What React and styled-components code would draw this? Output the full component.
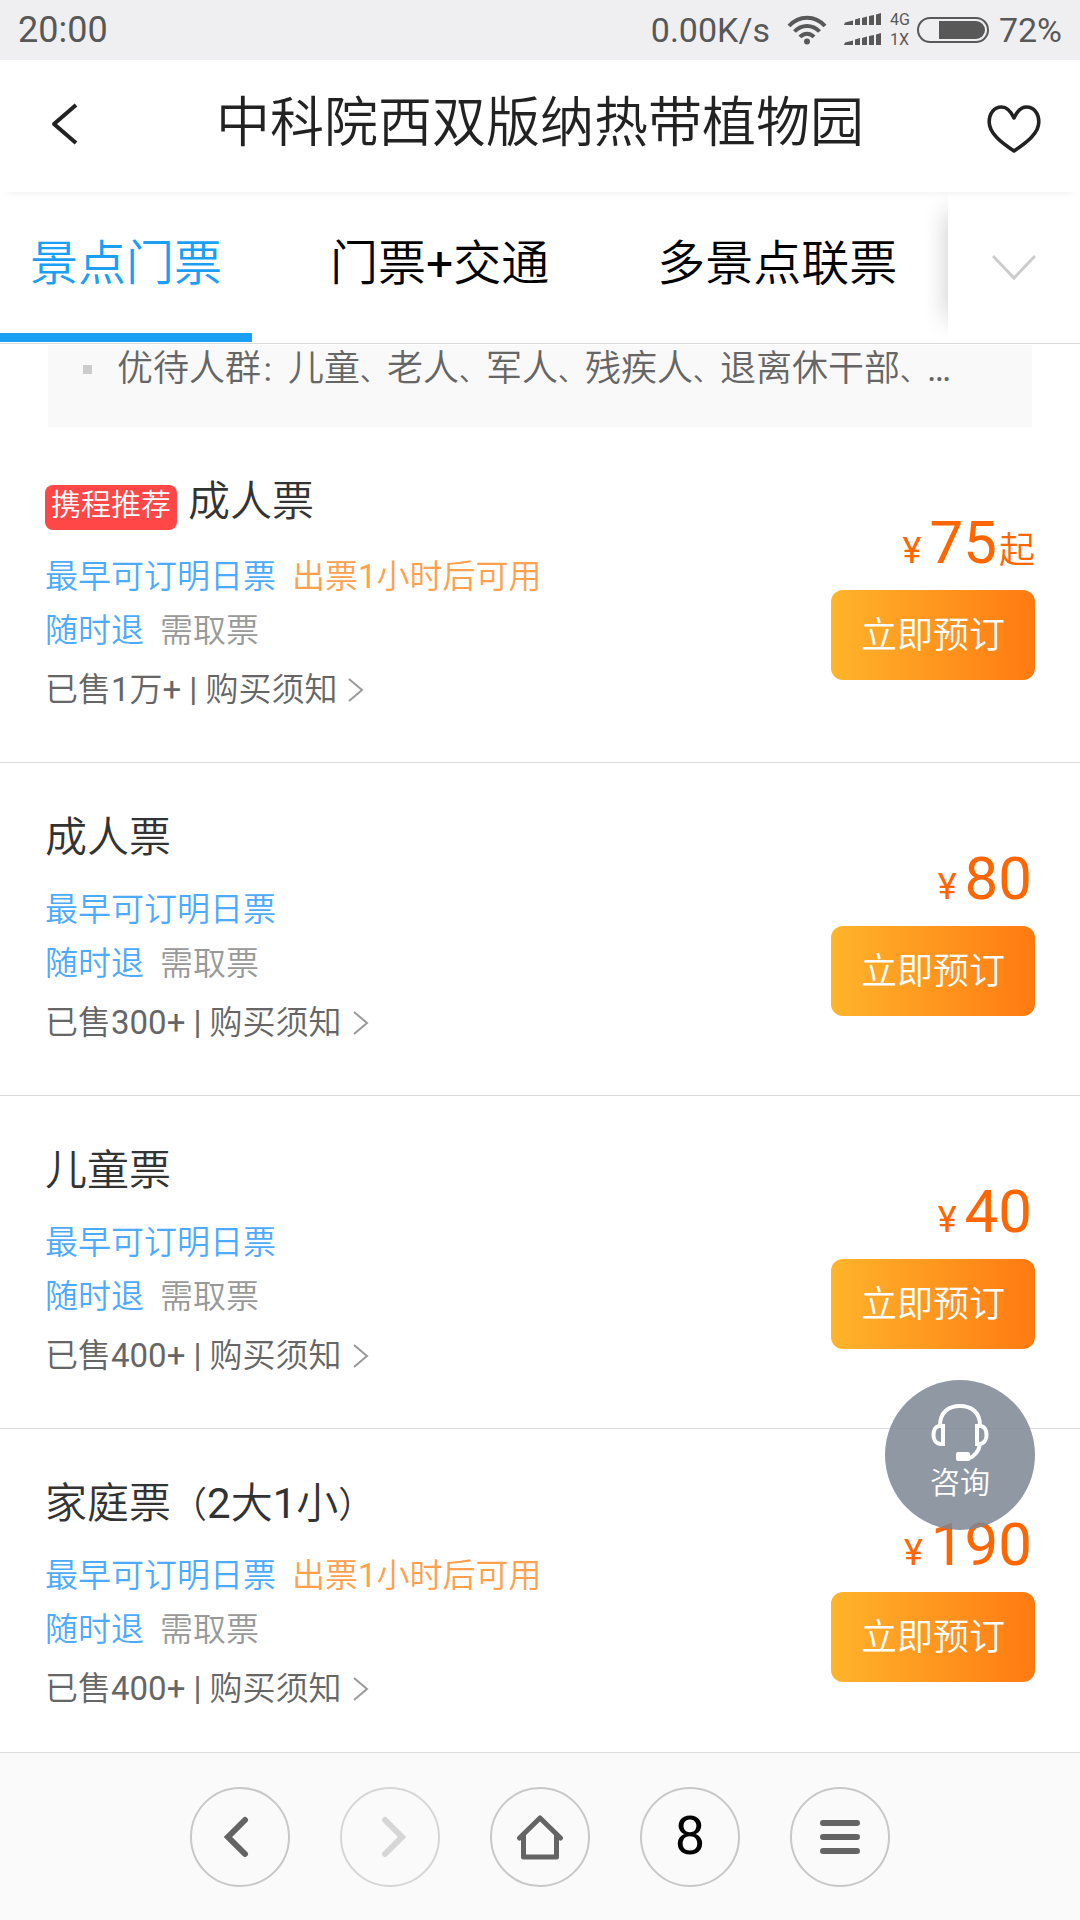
import React from "react";
import styled, { createGlobalStyle } from "styled-components";

const GlobalStyle = createGlobalStyle`
  *, *::before, *::after { box-sizing: border-box; }
  body {
    margin: 0;
    background: #fff;
    color: #333;
    font-family: Roboto, "Noto Sans CJK SC", sans-serif;
    font-weight: 400;
  }
  h1, h2, p, ul { margin: 0; padding: 0; font-weight: inherit; }
  ul { list-style: none; }
  button { border: 0; padding: 0; background: none; font: inherit; color: inherit; cursor: pointer; }
  a { color: inherit; text-decoration: none; }
  svg { display: block; flex: none; }
`;

const cjkLight = `
  font-family: Roboto, "Noto Sans CJK SC", sans-serif;
  font-weight: 350;
`;

const Screen = styled.div`
  display: flex;
  flex-direction: column;
  height: 100vh;
  overflow: hidden;
`;

/* ---------- status bar ---------- */

const StatusBar = styled.div`
  display: flex;
  align-items: center;
  justify-content: space-between;
  flex: none;
  height: 60px;
  padding: 0 18px;
  background: #efeff1;
  color: #585858;
  font-size: 34px;
  line-height: 60px;
`;

const Clock = styled.span`
  font-size: 36px;
`;

const StatusGroup = styled.div`
  display: flex;
  align-items: center;
`;

const Speed = styled.span`
  margin-right: 17px;
`;

const NetTypes = styled.div`
  display: flex;
  flex-direction: column;
  margin: 0 7px 0 8px;
  font-size: 16px;
  line-height: 20px;
`;

const Percent = styled.span`
  margin-left: 10px;
`;

/* ---------- title bar ---------- */

const TitleBar = styled.header`
  position: relative;
  z-index: 1;
  display: grid;
  grid-template-columns: 1fr auto 1fr;
  align-items: center;
  flex: none;
  height: 132px;
  padding: 0 39px;
  background: #fff;
  box-shadow: 0 6px 8px -6px rgba(0, 0, 0, 0.08);
`;

const PageTitle = styled.h1`
  ${cjkLight}
  padding-bottom: 4px;
  color: #222;
  font-size: 54px;
  line-height: 72px;
`;

const IconButton = styled.button`
  justify-self: ${(p) => p.$side};
  padding: ${(p) => (p.$side === "end" ? "5px 0 0" : "0 9px 4px")};
`;

/* ---------- tabs ---------- */

const TabBar = styled.nav`
  display: flex;
  flex: none;
  height: 152px;
  border-bottom: 1px solid #d9d9d9;
`;

const TabScroller = styled.div`
  display: flex;
  gap: 48px;
  flex: 1;
  min-width: 0;
  overflow: hidden;
`;

const Tab = styled.button`
  ${cjkLight}
  flex: none;
  height: 150px;
  padding: 0 30px 8px;
  border-bottom: 9px solid ${(p) => (p.$active ? "#1a9ff2" : "transparent")};
  color: ${(p) => (p.$active ? "#1a9ff2" : "#000")};
  font-size: 48px;
`;

const MoreTabs = styled.button`
  position: relative;
  display: flex;
  align-items: center;
  justify-content: center;
  flex: none;
  width: 132px;
  background: #fff;

  &::before {
    content: "";
    position: absolute;
    inset: 20px 0 24px;
    box-shadow: 0 0 24px rgba(0, 0, 0, 0.22);
    clip-path: inset(-20px 100% -20px -30px);
  }
`;

/* ---------- scrolling content ---------- */

const Content = styled.main`
  position: relative;
  flex: 1;
  min-height: 0;
  overflow: hidden;
`;

const Note = styled.p`
  ${cjkLight}
  display: flex;
  align-items: flex-start;
  height: 82px;
  margin: 1px 48px 0;
  padding-left: 35px;
  background: #f9f9f9;
  color: #666;
  font-size: 36px;
  line-height: 48px;
  white-space: nowrap;

  &::before {
    content: "";
    width: 9px;
    height: 9px;
    margin: 20px 25px 0 0;
    background: #ccc;
  }
`;

const Mark = styled.span`
  font-size: ${(p) => p.$size}px;
  line-height: 1;
`;

const Latin = styled.span`
  font-weight: 400;
`;

const Ticket = styled.li`
  display: flex;
  justify-content: space-between;
  padding: 45px 45px 48px;
  border-bottom: 1px solid #d9d9d9;
`;

const TicketName = styled.h2`
  ${cjkLight}
  display: flex;
  align-items: flex-start;
  gap: 11px;
  margin-bottom: 15px;
  padding-bottom: ${(p) => (p.$badged ? 3 : 0)}px;
  color: #333;
  font-size: 42px;
  line-height: 60px;
`;

const Badge = styled.span`
  height: 45px;
  margin-top: 13px;
  padding: 0 6px;
  border-radius: 8px;
  background: #ff4747;
  color: #fff;
  font-size: 30px;
  line-height: 40px;
`;

const TagLine = styled.p`
  ${cjkLight}
  display: flex;
  gap: 16px;
  font-size: 33px;
  line-height: 54px;
`;

const tagColors = { blue: "#4caaff", orange: "#ffa04c", gray: "#999" };

const Tag = styled.span`
  color: ${(p) => tagColors[p.$tone]};
`;

const Rules = styled.a`
  ${cjkLight}
  display: flex;
  align-items: center;
  gap: 11px;
  margin-top: 8px;
  color: #666;
  font-size: 33px;
  line-height: 48px;
`;

const Purchase = styled.div`
  display: flex;
  flex-direction: column;
  align-items: flex-end;
  margin-top: 41px;
`;

const Price = styled.p`
  display: flex;
  align-items: baseline;
  height: 60px;
  margin-bottom: 17px;
  padding-right: ${(p) => (p.$from ? 0 : 3)}px;
  color: #ff6600;
  font-size: 36px;
  line-height: 60px;
`;

const Amount = styled.span`
  margin-left: 8px;
  font-size: 60px;
`;

const From = styled.span`
  ${cjkLight}
  margin-left: 2px;
`;

const BookButton = styled.button`
  ${cjkLight}
  width: 204px;
  height: 90px;
  padding-bottom: 6px;
  border-radius: 12px;
  background: linear-gradient(90deg, #ffb42b, #ff7a12);
  color: #fff;
  font-size: 36px;
`;

const Consult = styled.button`
  ${cjkLight}
  position: absolute;
  right: 45px;
  bottom: 222px;
  display: flex;
  flex-direction: column;
  align-items: center;
  gap: 1px;
  width: 150px;
  height: 150px;
  padding-top: 22px;
  border-radius: 50%;
  background: rgba(124, 134, 148, 0.85);
  color: #fff;
  font-size: 30px;
  line-height: 40px;
`;

/* ---------- browser bar ---------- */

const BrowserBar = styled.nav`
  display: flex;
  justify-content: center;
  gap: 50px;
  flex: none;
  padding: 34px 0 33px;
  border-top: 1px solid #ddd;
  background: #fafafa;
`;

const RoundButton = styled.button`
  display: flex;
  align-items: center;
  justify-content: center;
  width: 100px;
  height: 100px;
  border: 2px solid #c8c8c8;
  border-radius: 50%;
  color: #646464;
  font-size: 54px;
  line-height: 60px;

  &:disabled {
    border-color: #d6d6d6;
    color: #d6d6d6;
  }
`;

const Count = styled.span`
  padding-bottom: 3px;
  color: #000;
  font-weight: 400;
`;

/* ---------- icons ---------- */

const WifiIcon = () => (
  <svg width="40" height="30" viewBox="0 0 40 30" fill="none" stroke="#585858" strokeWidth="4">
    <path d="M2 11C12 0 28 0 38 11" />
    <path d="M7.500 16.500C14.500 9 25.500 9 32.500 16.500" />
    <path d="M13 22C17 17.500 23 17.500 27 22" />
    <circle cx="20" cy="26.500" r="3" fill="#585858" stroke="none" />
  </svg>
);

const SignalIcon = () => (
  <svg width="55" height="34" viewBox="-17 0 55 34" fill="#585858">
    {[0, 20].map((y) => (
      <g key={y} transform={`translate(0 ${y})`}>
        <path d="M0 12L1 9.500 9 7.500V12z" />
        <path d="M11 12V6.500L16 5V12z" />
        <path d="M18 12V5L23 3.500V12z" />
        <path d="M25 12V3L30 2V12z" />
        <path d="M32 12V1.500L37 0V12z" />
      </g>
    ))}
  </svg>
);

const BatteryIcon = () => (
  <svg width="72" height="28" viewBox="0 0 72 28" fill="none">
    <rect x="1" y="2" width="70" height="24" rx="12" stroke="#585858" strokeWidth="2" />
    <path d="M22 5H59A9 9 0 0 1 59 23H22z" fill="#585858" />
  </svg>
);

const BackIcon = () => (
  <svg width="30" height="42" viewBox="0 0 30 42" fill="none" stroke="#222" strokeWidth="4" strokeLinejoin="round">
    <path d="M28 2L6 21L28 40" />
  </svg>
);

const HeartIcon = () => (
  <svg width="54" height="48" viewBox="0 0 54 48" fill="none" stroke="#222" strokeWidth="3.600" strokeLinejoin="round">
    <path d="M27 13C23.500 5.500 19 2 14.500 2C7 2 2.200 8.500 2.200 17C2.200 28 13.500 37 27 46C40.500 37 51.800 28 51.800 17C51.800 8.500 47 2 39.500 2C35 2 30.500 5.500 27 13Z" />
  </svg>
);

const DownIcon = () => (
  <svg width="44" height="28" viewBox="0 0 44 28" fill="none" stroke="#ccc" strokeWidth="3">
    <path d="M1 2L22 24L43 2" />
  </svg>
);

const SmallArrow = () => (
  <svg width="16" height="24" viewBox="0 0 16 24" fill="none" stroke="#999" strokeWidth="2">
    <path d="M1 1L14 12L1 23" />
  </svg>
);

const HeadsetIcon = () => (
  <svg width="60" height="60" viewBox="0 0 60 60" fill="none" stroke="#fff" strokeWidth="4">
    <path d="M10 23C10 11 18 4 30 4S50 11 50 23" />
    <path d="M13 24H10C5.500 24 3.500 28 3.500 33S6 42 11 42H13Z" />
    <path d="M47 24H50C54.500 24 56.500 28 56.500 33S54 42 49 42H47Z" />
    <path d="M50 42C49 49 45 54 38 57" />
    <rect x="26" y="50" width="14" height="9" rx="2" fill="#fff" stroke="none" />
  </svg>
);

const PrevIcon = ({ flip }) => (
  <svg width="34" height="42" viewBox="0 0 34 42" fill="none" stroke="currentColor" strokeWidth="6" strokeLinecap="round">
    <path d={flip ? "M12 4L29 21L12 38" : "M22 4L5 21L22 38"} />
  </svg>
);

const HomeIcon = () => (
  <svg width="48" height="46" viewBox="0 0 48 46" fill="none" stroke="currentColor" strokeWidth="5" strokeLinecap="round" strokeLinejoin="round">
    <path d="M3.500 24L24 4L44.500 24" />
    <path d="M7.500 22V43H40.500V22" />
  </svg>
);

const MenuIcon = () => (
  <svg width="40" height="34" viewBox="0 0 40 34" stroke="currentColor" strokeWidth="6" strokeLinecap="round">
    <path d="M3 3H37M3 17H37M3 31H37" />
  </svg>
);

/* ---------- data ---------- */

const noteText = "优待人群：儿童、老人、军人、残疾人、退离休干部、…";

const early = { tone: "blue", text: "最早可订明日票" };
const hour = { tone: "orange", text: "出票1小时后可用" };

const tickets = [
  { id: 1, badge: "携程推荐", name: "成人票", tags: [early, hour], sold: "1万+", price: 75, from: true },
  { id: 2, name: "成人票", tags: [early], sold: "300+", price: 80 },
  { id: 3, name: "儿童票", tags: [early], sold: "400+", price: 40 },
  { id: 4, name: "家庭票（2大1小）", tags: [early, hour], sold: "400+", price: 190 },
];

/* Full-width punctuation gets its own size; digits and signs keep the regular weight. */
const MixedText = ({ text, markSize }) =>
  text.split(/([：、（）]|[0-9+|…]+)/).map((part, i) => {
    if (/^[：、（）]$/.test(part)) return <Mark key={i} $size={markSize}>{part}</Mark>;
    if (/^[0-9+|…]+$/.test(part)) return <Latin key={i}>{part}</Latin>;
    return part;
  });

function TicketRow({ ticket }) {
  return (
    <Ticket>
      <div>
        <TicketName $badged={!!ticket.badge}>
          {ticket.badge && <Badge>{ticket.badge}</Badge>}
          <span><MixedText text={ticket.name} markSize={36} /></span>
        </TicketName>
        <TagLine>
          {ticket.tags.map((t) => (
            <Tag key={t.text} $tone={t.tone}><MixedText text={t.text} /></Tag>
          ))}
        </TagLine>
        <TagLine>
          <Tag $tone="blue">随时退</Tag>
          <Tag $tone="gray">需取票</Tag>
        </TagLine>
        <Rules href="#rules">
          <span><MixedText text={`已售${ticket.sold} | 购买须知`} /></span>
          <SmallArrow />
        </Rules>
      </div>
      <Purchase>
        <Price $from={ticket.from}>
          <span>¥</span>
          <Amount>{ticket.price}</Amount>
          {ticket.from && <From>起</From>}
        </Price>
        <BookButton type="button">立即预订</BookButton>
      </Purchase>
    </Ticket>
  );
}

export default function App() {
  return (
    <Screen>
      <GlobalStyle />
      <StatusBar>
        <Clock>20:00</Clock>
        <StatusGroup>
          <Speed>0.00K/s</Speed>
          <WifiIcon />
          <SignalIcon />
          <NetTypes><span>4G</span><span>1X</span></NetTypes>
          <BatteryIcon />
          <Percent>72%</Percent>
        </StatusGroup>
      </StatusBar>

      <TitleBar>
        <IconButton type="button" $side="start" aria-label="返回"><BackIcon /></IconButton>
        <PageTitle>中科院西双版纳热带植物园</PageTitle>
        <IconButton type="button" $side="end" aria-label="收藏"><HeartIcon /></IconButton>
      </TitleBar>

      <TabBar>
        <TabScroller>
          <Tab type="button" $active>景点门票</Tab>
          <Tab type="button"><MixedText text="门票+交通" /></Tab>
          <Tab type="button">多景点联票</Tab>
        </TabScroller>
        <MoreTabs type="button" aria-label="更多"><DownIcon /></MoreTabs>
      </TabBar>

      <Content>
        <Note>
          <span><MixedText text={noteText} markSize={27} /></span>
        </Note>
        <ul>
          {tickets.map((t) => <TicketRow key={t.id} ticket={t} />)}
        </ul>
        <Consult type="button">
          <HeadsetIcon />
          咨询
        </Consult>
      </Content>

      <BrowserBar>
        <RoundButton type="button" aria-label="后退"><PrevIcon /></RoundButton>
        <RoundButton type="button" aria-label="前进" disabled><PrevIcon flip /></RoundButton>
        <RoundButton type="button" aria-label="主页"><HomeIcon /></RoundButton>
        <RoundButton type="button"><Count>8</Count></RoundButton>
        <RoundButton type="button" aria-label="菜单"><MenuIcon /></RoundButton>
      </BrowserBar>
    </Screen>
  );
}
